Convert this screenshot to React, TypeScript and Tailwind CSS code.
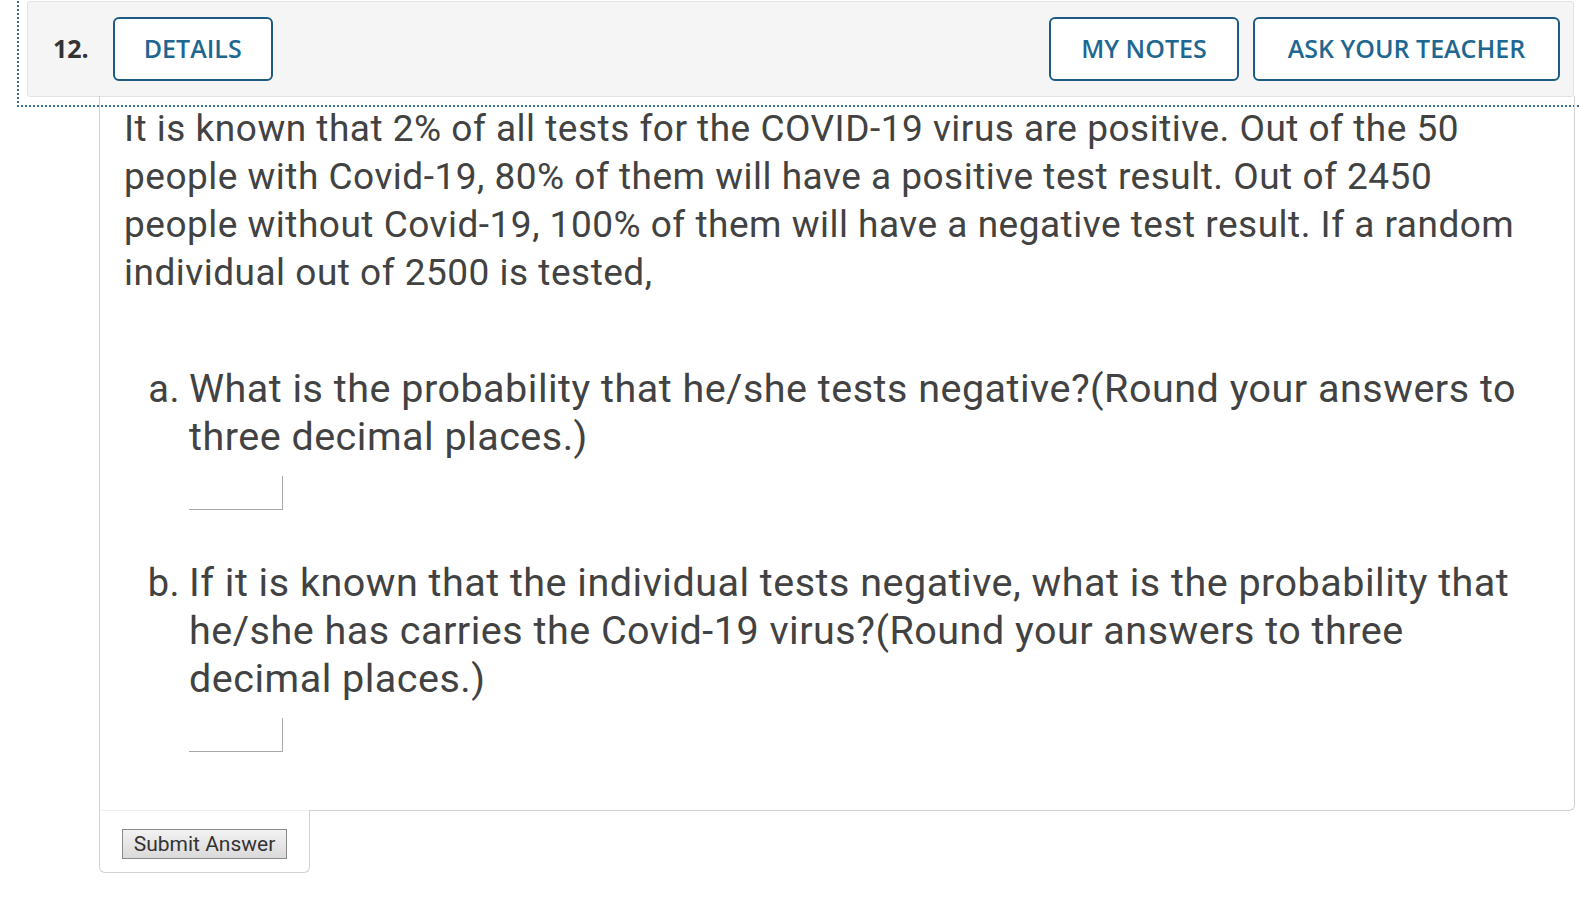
import React from "react";

const btn =
  "h-[64px] rounded-[6px] border-[2.5px] border-[#1d5b82] bg-white text-[#1e6791] text-[25px] font-semibold flex items-center justify-center";

function AnswerBox() {
  return <div className="mt-[15px] ml-[65px] w-[94px] h-[34px] border-b border-r border-[#a8a8a8]" />;
}

export default function App() {
  return (
    <div className="w-[1579px] h-[897px] bg-white overflow-hidden font-['Roboto',sans-serif] text-[#424242]">
      {/* Question header with dotted focus outline */}
      <div className="ml-[17px] pl-[8px] pr-[5px] pb-[8px] border-l-2 border-b-2 border-dotted border-[#3b6f97]">
        <div className="mt-px h-[96px] bg-[#f5f5f5] border border-[#e3e3e3] rounded-[3px] flex items-center pl-[25px] pr-[13px] font-['Open_Sans',sans-serif]">
          <span className="text-[25px] font-bold text-[#333] mr-[24px]">12.</span>
          <button className={`${btn} w-[160px]`}>DETAILS</button>
          <div className="ml-auto flex gap-[14px]">
            <button className={`${btn} w-[190px]`}>MY NOTES</button>
            <button className={`${btn} w-[307px]`}>ASK YOUR TEACHER</button>
          </div>
        </div>
      </div>

      {/* Question body */}
      <div className="relative -mt-[11px] ml-[99px] w-[1476px] border-l border-r border-b border-[#d2d2d2] rounded-br-[6px] pt-[9px] pl-[24px] pr-[29px] pb-[58px] leading-[48px]">
        <p className="text-[37px] tracking-[0.5px]">
          It is known that 2% of all tests for the COVID-19 virus are positive. Out of the 50 people with Covid-19, 80% of
          them will have a positive test result. Out of 2450 people without Covid-19, 100% of them will have a negative
          test result. If a random individual out of 2500 is tested,
        </p>

        <div className="mt-[68px] text-[39.5px] tracking-[0.5px]">
          <div className="flex">
            <span className="w-[65px] shrink-0 text-right pr-[9px] text-[38px]">a.</span>
            <span>What is the probability that he/she tests negative?(Round your answers to three decimal places.)</span>
          </div>
          <AnswerBox />
        </div>

        <div className="mt-[49px] text-[39.5px] tracking-[0.5px]">
          <div className="flex">
            <span className="w-[65px] shrink-0 text-right pr-[9px] text-[38px]">b.</span>
            <span>
              If it is known that the individual tests negative, what is the probability that he/she has carries the
              Covid-19 virus?(Round your answers to three decimal places.)
            </span>
          </div>
          <AnswerBox />
        </div>
      </div>

      {/* Submit tab */}
      <div className="relative -mt-px ml-[99px] w-[211px] bg-white border-l border-r border-b border-t border-[#d2d2d2] border-t-[#efefef] rounded-b-[6px] pt-[18px] pl-[22px] pb-[13px]">
        <button className="w-[165px] h-[30px] border border-[#8a8a8a] bg-gradient-to-b from-[#f2f2f2] to-[#dadada] text-[21px] leading-none text-[#333]">
          Submit Answer
        </button>
      </div>
    </div>
  );
}
